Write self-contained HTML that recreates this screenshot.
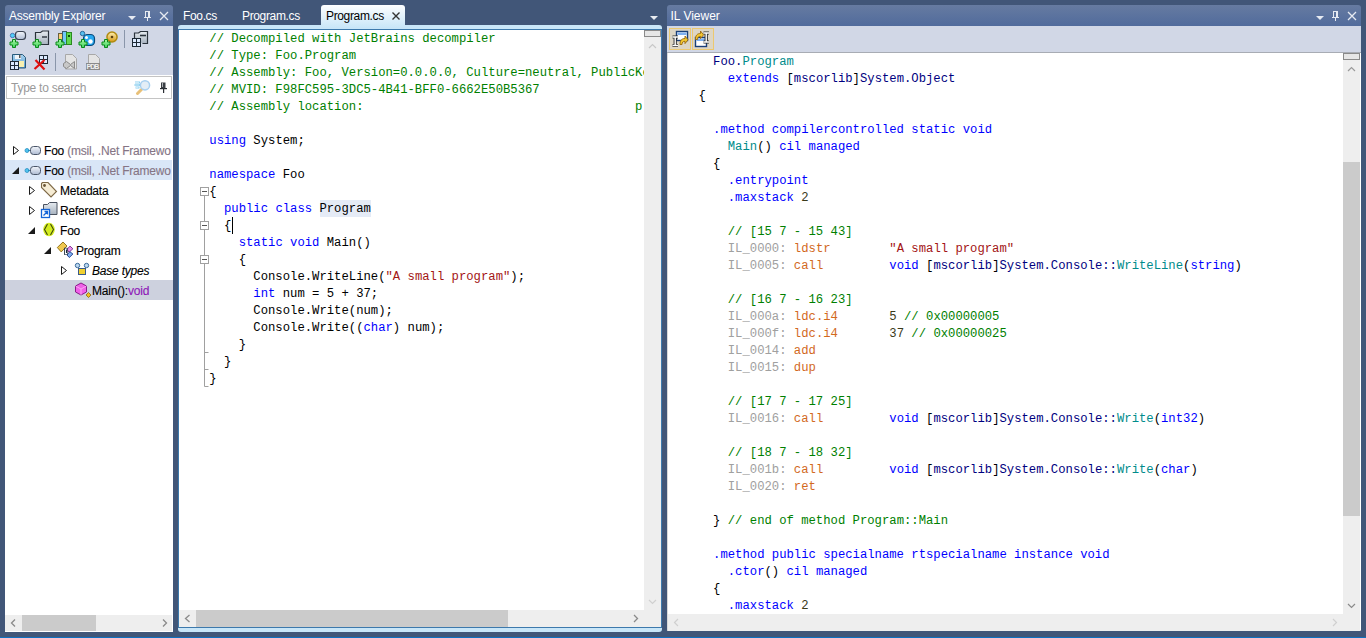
<!DOCTYPE html>
<html><head><meta charset="utf-8">
<style>
*{margin:0;padding:0;box-sizing:border-box}
html,body{width:1366px;height:638px;overflow:hidden;background:#415678;font-family:"Liberation Sans",sans-serif;position:relative}
.a{position:absolute}
.hdr{position:absolute;height:21px;background:linear-gradient(#667ba1,#516b9c);border-radius:3px 3px 0 0}
.ttl{position:absolute;color:#fff;font-size:12px;letter-spacing:-0.22px;white-space:pre;line-height:14px}
.tb{position:absolute;background:#d1d7e6}
.code{position:absolute;font-family:"Liberation Mono",monospace;font-size:12.245px;line-height:17px;white-space:pre;color:#000}
.k{color:#0000ff}.c{color:#008000}.s{color:#a31515}.t{color:#008b8b}.n{color:#000080}.o{color:#d2691e}.g{color:#a0a0a0}.d{color:#3a3a1a}
.sb{position:absolute;background:#eeeeee}
.th{position:absolute;background:#cbcbcb}
.tree{position:absolute;margin-top:1px;font-size:12px;letter-spacing:-0.2px;white-space:pre;line-height:20px;color:#000;-webkit-text-stroke:0.12px currentColor}
</style></head><body>

<!-- ===== Assembly Explorer ===== -->
<div class="a" style="left:5px;top:26px;width:168px;height:606px;background:#fff"></div>
<div class="hdr" style="left:5px;top:5px;width:168px"></div>
<div class="ttl" style="left:9px;top:9px">Assembly Explorer</div>
<div class="tb" style="left:5px;top:26px;width:168px;height:49px"></div>
<div class="a" style="left:6px;top:76px;width:166px;height:23px;border:1px solid #c4c4c4;background:#fff"></div>
<div class="a" style="left:11px;top:81px;font-size:12px;letter-spacing:-0.25px;color:#9a9a9a;white-space:pre;line-height:14px">Type to search</div>

<!-- tree -->
<div class="a" style="left:5px;top:160px;width:167px;height:20px;background:#d9e6f7"></div>
<div class="a" style="left:5px;top:280px;width:168px;height:20px;background:#cdd1de"></div>

<div class="tree" style="left:44px;top:140px;width:128px;overflow:hidden">Foo <span style="color:#857585">(msil, .Net Framewo</span></div>
<div class="tree" style="left:44px;top:160px;width:128px;overflow:hidden">Foo <span style="color:#857585">(msil, .Net Framewo</span></div>
<div class="tree" style="left:60px;top:180px">Metadata</div>
<div class="tree" style="left:60px;top:200px">References</div>
<div class="tree" style="left:60px;top:220px">Foo</div>
<div class="tree" style="left:76px;top:240px">Program</div>
<div class="tree" style="left:92px;top:260px;font-style:italic">Base types</div>
<div class="tree" style="left:92px;top:280px">Main():<span style="color:#8e18b8">void</span></div>

<!-- AE horizontal scrollbar -->
<div class="sb" style="left:5px;top:615px;width:167px;height:16px"></div>
<div class="th" style="left:22px;top:615px;width:74px;height:16px"></div>

<!-- ===== Editor ===== -->
<div class="a" style="left:178px;top:25px;width:484px;height:607px;background:#c9e6f8;border-radius:3px"></div>
<div class="a" style="left:178px;top:29px;width:484px;height:599px;border:1px solid #3d79ac;background:#fff"></div>

<div class="a" style="left:321px;top:5px;width:84px;height:22px;background:linear-gradient(#fdfeff,#cbe7f8);border-radius:3px 3px 0 0"></div>
<div class="ttl" style="left:183px;top:9px;letter-spacing:-0.35px">Foo.cs</div>
<div class="ttl" style="left:242px;top:9px;letter-spacing:-0.35px">Program.cs</div>
<div class="ttl" style="left:326px;top:9px;letter-spacing:-0.35px;color:#000">Program.cs</div>

<div class="a" style="left:320px;top:200px;width:51px;height:17px;background:#e5ebf6"></div>
<div class="code" style="left:209.3px;top:31px;width:434.7px;height:580px;overflow:hidden"><span class="c">// Decompiled with JetBrains decompiler
// Type: Foo.Program
// Assembly: Foo, Version=0.0.0.0, Culture=neutral, PublicKeyToken=null
// MVID: F98FC595-3DC5-4B41-BFF0-6662E50B5367
// Assembly location:                                     p</span>

<span class="k">using</span> System;

<span class="k">namespace</span> Foo
{
  <span class="k">public class</span> Program
  {
    <span class="k">static void</span> Main()
    {
      Console.WriteLine(<span class="s">"A small program"</span>);
      <span class="k">int</span> num = 5 + 37;
      Console.Write(num);
      Console.Write((<span class="k">char</span>) num);
    }
  }
}</div>

<!-- editor scrollbars -->
<div class="sb" style="left:644px;top:30px;width:17px;height:580px"></div>
<div class="sb" style="left:179px;top:610px;width:482px;height:17px"></div>
<div class="th" style="left:196px;top:610px;width:312px;height:17px"></div>

<!-- ===== IL Viewer ===== -->
<div class="a" style="left:667px;top:26px;width:694px;height:605px;background:#fff;border-left:1px solid #d8d8d8;border-bottom:1px solid #c8c8c8"></div>
<div class="hdr" style="left:667px;top:5px;width:694px"></div>
<div class="ttl" style="left:670.5px;top:9px;letter-spacing:0">IL Viewer</div>
<div class="tb" style="left:667px;top:26px;width:694px;height:27px;border-bottom:1px solid #a8acb4"></div>

<div class="code" style="left:698.4px;top:54px;width:644px;height:561px;overflow:hidden">  <span class="n">Foo.</span><span class="t">Program</span>
    <span class="k">extends</span> [<span class="n">mscorlib</span>]<span class="n">System.Object</span>
{

  <span class="k">.method compilercontrolled static void</span>
    <span class="t">Main</span>() <span class="k">cil managed</span>
  {
    <span class="k">.entrypoint</span>
    <span class="k">.maxstack</span> <span class="d">2</span>

    <span class="c">// [15 7 - 15 43]</span>
    <span class="g">IL_0000:</span> <span class="o">ldstr</span>        <span class="s">"A small program"</span>
    <span class="g">IL_0005:</span> <span class="o">call</span>         <span class="k">void</span> [<span class="n">mscorlib</span>]<span class="n">System.Console::</span><span class="t">WriteLine</span>(<span class="k">string</span>)

    <span class="c">// [16 7 - 16 23]</span>
    <span class="g">IL_000a:</span> <span class="o">ldc.i4</span>       <span class="d">5</span> <span class="c">// 0x00000005</span>
    <span class="g">IL_000f:</span> <span class="o">ldc.i4</span>       <span class="d">37</span> <span class="c">// 0x00000025</span>
    <span class="g">IL_0014:</span> <span class="o">add</span>
    <span class="g">IL_0015:</span> <span class="o">dup</span>

    <span class="c">// [17 7 - 17 25]</span>
    <span class="g">IL_0016:</span> <span class="o">call</span>         <span class="k">void</span> [<span class="n">mscorlib</span>]<span class="n">System.Console::</span><span class="t">Write</span>(<span class="k">int32</span>)

    <span class="c">// [18 7 - 18 32]</span>
    <span class="g">IL_001b:</span> <span class="o">call</span>         <span class="k">void</span> [<span class="n">mscorlib</span>]<span class="n">System.Console::</span><span class="t">Write</span>(<span class="k">char</span>)
    <span class="g">IL_0020:</span> <span class="o">ret</span>

  } <span class="c">// end of method Program::Main</span>

  <span class="k">.method public specialname rtspecialname instance void</span>
    <span class="k">.ctor</span>() <span class="k">cil managed</span>
  {
    <span class="k">.maxstack</span> <span class="d">2</span></div>

<!-- IL scrollbars -->
<div class="sb" style="left:1343px;top:53px;width:17px;height:561px"></div>
<div class="th" style="left:1343px;top:162px;width:17px;height:354px"></div>
<div class="sb" style="left:668px;top:614px;width:692px;height:17px"></div>


<svg class="a" style="left:0;top:0" width="1366" height="638" viewBox="0 0 1366 638">
<defs>
<linearGradient id="pill" x1="0" y1="0" x2="0" y2="1"><stop offset="0" stop-color="#f4f7fc"/><stop offset="1" stop-color="#aebbd2"/></linearGradient>
<linearGradient id="fold" x1="0" y1="0" x2="0" y2="1"><stop offset="0" stop-color="#e6ebf0"/><stop offset="1" stop-color="#a7b2bf"/></linearGradient>
</defs>

<!-- AE toolbar icons -->
<defs>
<linearGradient id="grn" x1="0" y1="0" x2="0" y2="1"><stop offset="0" stop-color="#a8f8a0"/><stop offset="1" stop-color="#40d060"/></linearGradient>
<linearGradient id="gear" x1="0" y1="0" x2="0" y2="1"><stop offset="0" stop-color="#fbe9a8"/><stop offset="1" stop-color="#d9a020"/></linearGradient>
<linearGradient id="flop" x1="0" y1="0" x2="0" y2="1"><stop offset="0" stop-color="#a8d4f0"/><stop offset="1" stop-color="#5a9ad0"/></linearGradient>
<g id="plus"><path d="M2.5 0.5h3v2.5h2.5v3h-2.5v2.5h-3v-2.5h-2.5v-3h2.5z" fill="url(#grn)" stroke="#0a8a1a" stroke-width="1"/></g>
<g id="grid"><rect x="0" y="0" width="9" height="9" fill="#1e2a36"/><rect x="1" y="1" width="3" height="3" fill="#dceaff"/><rect x="5" y="1" width="3" height="3" fill="#dceaff"/><rect x="1" y="5" width="3" height="3" fill="#dceaff"/><rect x="5" y="5" width="3" height="3" fill="#dceaff"/></g>
</defs>
<!-- icon1 assembly+plus -->
<circle cx="12.5" cy="35.5" r="2.2" fill="#50d0f8" stroke="#4a78b8" stroke-width="1"/>
<path d="M14.5 35.5h2" stroke="#50c8f0" stroke-width="1"/>
<rect x="15.5" y="31.5" width="10" height="8" rx="3" fill="url(#pill)" stroke="#3a4250" stroke-width="1.2"/>
<use href="#plus" x="10" y="39"/>
<!-- icon2 folder+plus -->
<path d="M35.5 38.5v-6h5l2 -1.5h6v13.5h-13z" fill="url(#fold)" stroke="#2a323c" stroke-width="1.2"/>
<path d="M42 37h5" stroke="#2a323c" stroke-width="1.4"/>
<use href="#plus" x="33" y="39"/>
<!-- icon3 books+plus -->
<rect x="58.5" y="33.5" width="4" height="11" fill="#fcd070" stroke="#6a6040" stroke-width="1"/>
<rect x="62.5" y="31.5" width="4" height="13" fill="#70c8f8" stroke="#3a5a70" stroke-width="1"/>
<rect x="66.5" y="32.5" width="5" height="12" fill="#60d850" stroke="#2a8a20" stroke-width="1"/>
<rect x="68" y="35" width="2" height="2" fill="#0a4a0a"/>
<use href="#plus" x="56" y="39"/>
<!-- icon4 blob+plus -->
<circle cx="82.5" cy="33.5" r="2.2" fill="#58c0f0" stroke="#2a6a9a" stroke-width="1"/>
<rect x="83.5" y="34.5" width="11" height="11" rx="4" fill="#28a8f0" stroke="#0a4a7a" stroke-width="1.2"/>
<circle cx="86.5" cy="37.5" r="1.5" fill="#fff"/>
<circle cx="90.5" cy="41.5" r="2.2" fill="#fff"/>
<use href="#plus" x="79" y="39"/>
<!-- icon5 gear+plus -->
<circle cx="112" cy="37" r="5.8" fill="#b08a10"/>
<circle cx="112" cy="37" r="4.3" fill="url(#gear)"/>
<circle cx="112" cy="37" r="1.3" fill="#5a4010"/>
<use href="#plus" x="102" y="39"/>
<!-- separators -->
<rect x="124" y="30" width="1" height="18" fill="#8a96aa"/>
<rect x="55" y="53" width="1" height="18" fill="#8a96aa"/>
<!-- icon6 folder+grid -->
<path d="M134.5 38v-5h4l2 -1.5h7v12h-5" fill="url(#fold)" stroke="#2a323c" stroke-width="1.2"/>
<path d="M140 35.5h6" stroke="#2a323c" stroke-width="1.6"/>
<use href="#grid" x="132" y="38"/>
<!-- row2 save -->
<path d="M12.5 54.5h10l3 3v10.5h-13z" fill="url(#flop)" stroke="#2a5a7a" stroke-width="1"/>
<rect x="15" y="55" width="6" height="4" fill="#f0f4f8"/>
<rect x="19" y="55" width="1.5" height="3" fill="#555"/>
<rect x="18" y="61" width="6" height="6" fill="#f8f0b0"/>
<use href="#grid" x="10" y="61"/>
<!-- row2 delete -->
<use href="#grid" x="39" y="55"/>
<path d="M34.5 69l10 -9M35.5 60l9 9.5" stroke="#e01010" stroke-width="2.2" fill="none"/>
<!-- vs doc gray -->
<path d="M65.5 54.5h7l4 4v10.5h-11z" fill="#e4e4e4" stroke="#a8a8a8" stroke-width="1"/>
<path d="M63.5 63.5l3 -2l4 3l4 -3v7l-4 -3l-4 3l-3 -2z" fill="#c8c8c8" stroke="#8a8a8a" stroke-width="1"/>
<!-- pdb gray -->
<path d="M88.5 54.5h7l4 4v10.5h-11z" fill="#e4e4e4" stroke="#a8a8a8" stroke-width="1"/>
<rect x="86" y="63" width="14" height="7" fill="#8a8a8a"/>
<text x="86.6" y="69.3" font-family="Liberation Sans" font-size="7" font-weight="bold" fill="#f0f0f0" textLength="12.8">PDB</text>

<!-- IL toolbar buttons -->
<rect x="669.5" y="28.5" width="21" height="21" fill="#ddd6c6" stroke="#ecc870" stroke-width="1"/>
<rect x="692.5" y="28.5" width="21" height="21" fill="#ddd6c6" stroke="#ecc870" stroke-width="1"/>
<rect x="676.5" y="31.5" width="11" height="9" fill="#fff" stroke="#1a3f7a" stroke-width="1.4"/>
<rect x="677.5" y="32.5" width="9" height="2.5" fill="#7fb0f0"/>
<path d="M672.5 37h5.5M675.2 37v8.5M672.5 45.5h5.5" stroke="#2a2a2a" stroke-width="3.2" fill="none"/>
<path d="M672.5 37h5.5M675.2 37v8.5M672.5 45.5h5.5" stroke="#fff" stroke-width="1.4" fill="none"/>
<path d="M680 44.5c0 -4 1.5 -6 5 -6v-2.5l3 3.8l-3 3.8v-2.3c-2 0 -3 1 -3 3.2z" fill="#f4c830" stroke="#9a6a10" stroke-width="0.9"/>
<rect x="695.5" y="37.5" width="11" height="9" fill="#fff" stroke="#1a3f7a" stroke-width="1.4"/>
<rect x="696.5" y="38.5" width="9" height="2.5" fill="#7fb0f0"/>
<path d="M703.5 33h5.5M706.2 33v9M703.5 42h5.5" stroke="#2a2a2a" stroke-width="3.2" fill="none"/>
<path d="M703.5 33h5.5M706.2 33v9M703.5 42h5.5" stroke="#fff" stroke-width="1.4" fill="none"/>
<path d="M695.5 39.5c0 -4 1.5 -6 5 -6v-2.5l3 3.8l-3 3.8v-2.3c-2 0 -3 1 -3 3.2z" fill="#f4c830" stroke="#9a6a10" stroke-width="0.9"/>

<!-- header icons AE -->
<g fill="#e6eaf2" stroke="none">
<path d="M128 16h8l-4 4z"/>
<path d="M1316 16h8l-4 4z"/>
<path d="M650 16h8l-4 4z" fill="#e8ebf0"/>
</g>
<g stroke="#e6eaf2" fill="none" stroke-width="1.3">
<path d="M160 12l8 8M168 12l-8 8"/>
<path d="M1348 12l8 8M1356 12l-8 8"/>
</g>
<g fill="#e6eaf2">
<rect x="145" y="11" width="1" height="6"/><rect x="148" y="11" width="2" height="6"/><rect x="145" y="11" width="5" height="1"/><rect x="144" y="17" width="7" height="1"/><rect x="147" y="18" width="1" height="3"/>
<rect x="1333" y="11" width="1" height="6"/><rect x="1336" y="11" width="2" height="6"/><rect x="1333" y="11" width="5" height="1"/><rect x="1332" y="17" width="7" height="1"/><rect x="1335" y="18" width="1" height="3"/>
</g>
<!-- tab close -->
<path d="M392.5 12.5l7 7M399.5 12.5l-7 7" stroke="#333" stroke-width="1.4" fill="none"/>

<!-- tree expanders -->
<g fill="none" stroke="#1a1a1a" stroke-width="1">
<path d="M13.5 146.5v8l5 -4z"/>
<path d="M29.5 186.5v8l5 -4z"/>
<path d="M29.5 206.5v8l5 -4z"/>
<path d="M61.5 266.5v8l5 -4z"/>
</g>
<g fill="#1a1a1a">
<path d="M19 167v7h-7z"/>
<path d="M35 227v7h-7z"/>
<path d="M51 247v7h-7z"/>
</g>
<!-- assembly icons -->
<g>
<circle cx="27" cy="150.5" r="2" fill="#4fc3f0" stroke="#2b8fc0" stroke-width="0.8"/>
<path d="M28 150.5h3" stroke="#2b8fc0"/>
<rect x="30.5" y="146.5" width="10" height="8" rx="3" fill="url(#pill)" stroke="#4a5568" stroke-width="1"/>
<circle cx="27" cy="170.5" r="2" fill="#4fc3f0" stroke="#2b8fc0" stroke-width="0.8"/>
<path d="M28 170.5h3" stroke="#2b8fc0"/>
<rect x="30.5" y="166.5" width="10" height="8" rx="3" fill="url(#pill)" stroke="#4a5568" stroke-width="1"/>
</g>
<!-- metadata tag -->
<path d="M41.5 183.5l1 -1h5.5l8.5 9l-5.5 5.5l-9.5 -9.5z" fill="#f6ecd4" stroke="#7d6845" stroke-width="1.1"/>
<circle cx="44.5" cy="185.5" r="1.4" fill="#6a5535"/>
<!-- references -->
<path d="M43.5 204.5h4l2 -2h7.5v12h-13.5z" fill="url(#fold)" stroke="#4a5260" stroke-width="1"/>
<rect x="41.5" y="209.5" width="8" height="8" fill="#fff" stroke="#1565d8" stroke-width="1.3"/>
<path d="M43.5 215.5l4 -4M44.5 211.5h3v3" stroke="#1565d8" stroke-width="1.3" fill="none"/>
<!-- namespace -->
<ellipse cx="49" cy="229.5" rx="5.8" ry="6.8" fill="#d4ec20"/>
<path d="M47.5 224l-3 5.5l3 5.5M50.5 224l3 5.5l-3 5.5" stroke="#3e4a10" stroke-width="1.1" fill="none"/>
<!-- class icon -->
<path d="M57.3 247.5l5.7 -5.5l4 4l-5.8 5.9z" fill="#f0c850" stroke="#8a6a10" stroke-width="0.9"/>
<path d="M67 249.4l3 -3.3l2.9 2.7l-3.9 3.4z" fill="#e890f0" stroke="#7a2a8a" stroke-width="0.9"/>
<path d="M67 255l2.8 -3.3l3.1 2.3l-3.6 3.5z" fill="#80b0f0" stroke="#1a3a8a" stroke-width="0.9"/>
<rect x="64" y="247.8" width="3.6" height="7" fill="#1a2a3a"/>
<path d="M67 249h-1.6v4.6h1.6" stroke="#fff" stroke-width="1.1" fill="none"/>
<!-- base types -->
<rect x="78.5" y="268.5" width="7" height="6" fill="#f0d030" stroke="#3a5a8a" stroke-width="1"/>
<circle cx="77.5" cy="265.5" r="2.2" fill="#bcd8f0" stroke="#3a6a9a" stroke-width="1"/>
<circle cx="86.5" cy="265.5" r="2.2" fill="#bcd8f0" stroke="#3a6a9a" stroke-width="1"/>
<!-- method -->
<path d="M81 283l5.5 3v6l-5.5 3l-5.5 -3v-6z" fill="#f060e8" stroke="#8a1a8a" stroke-width="1"/>
<path d="M75.5 286l5.5 3l5.5 -3M81 289v6" stroke="#ffc0f8" stroke-width="0.7" fill="none"/>
<path d="M86 295l2.5 -2.5l2.5 2.5l-2.5 2.5z" fill="#f0c020" stroke="#8a6a10" stroke-width="0.8"/>

<!-- search box icons -->
<path d="M135 82.5h5M134.5 85h5.5M135.5 87.5h4" stroke="#8ed0f0" stroke-width="2" fill="none"/>
<path d="M135 82.5h4M134.5 85h4.5M135.5 87.5h3" stroke="#e8f6fc" stroke-width="0.7" fill="none"/>
<path d="M141.5 89.5l-4 4" stroke="#e8c078" stroke-width="3" stroke-linecap="round"/>
<circle cx="145" cy="85.3" r="4.6" fill="#e4eef6" stroke="#a8d0f0" stroke-width="1.5"/>
<rect x="161" y="82.5" width="4.5" height="5.5" fill="#3a3e44"/>
<rect x="162" y="83" width="1" height="4" fill="#b0b4b8"/>
<rect x="160" y="88" width="7" height="1.2" fill="#2a2e34"/>
<rect x="163" y="89" width="1.2" height="4" fill="#2a2e34"/>
<!-- editor gutter -->
<g fill="#fff" stroke="#a0a0a0" stroke-width="1">
<path d="M204.5 196v190.5h4M204.5 352.5h4M204.5 369.5h4" fill="none"/>
<rect x="200.5" y="187.5" width="8" height="8"/>
<rect x="200.5" y="221.5" width="8" height="8"/>
<rect x="200.5" y="255.5" width="8" height="8"/>
</g>
<g stroke="#555" stroke-width="1">
<path d="M202 191.5h5M202 225.5h5M202 259.5h5"/>
</g>
<!-- caret -->
<rect x="232" y="217" width="1" height="17" fill="#000"/>

<!-- editor scrollbar parts -->
<rect x="644.5" y="30.5" width="16" height="6" fill="#e6e6e6" stroke="#8a8a8a" stroke-width="1"/>
<path d="M649 48l3.5 -3.5l3.5 3.5" stroke="#c8c8c8" fill="none" stroke-width="1.2"/>
<path d="M649 600l3.5 3.5l3.5 -3.5" stroke="#d0d0d0" fill="none" stroke-width="1.2"/>
<path d="M189.5 615l-4 3.5l4 3.5" stroke="#8a8a8a" fill="none" stroke-width="1.3"/>
<path d="M634 615l3.5 3.5l-3.5 3.5" stroke="#8a8a8a" fill="none" stroke-width="1.3"/>
<!-- AE scrollbar arrows -->
<path d="M15 619.5l-3.5 3.5l3.5 3.5" stroke="#8a8a8a" fill="none" stroke-width="1.3"/>
<path d="M163 619.5l3.5 3.5l-3.5 3.5" stroke="#8a8a8a" fill="none" stroke-width="1.3"/>
<!-- IL scrollbar parts -->
<rect x="1343.5" y="53.5" width="16" height="6" fill="#e6e6e6" stroke="#8a8a8a" stroke-width="1"/>
<path d="M1348 71l3.5 -3.5l3.5 3.5" stroke="#9a9a9a" fill="none" stroke-width="1.2"/>
<path d="M1348 604l3.5 3.5l3.5 -3.5" stroke="#8a8a8a" fill="none" stroke-width="1.2"/>
<path d="M678 619l-3.5 3.5l3.5 3.5" stroke="#d0d0d0" fill="none" stroke-width="1.2"/>
<path d="M1333 619l3.5 3.5l-3.5 3.5" stroke="#d0d0d0" fill="none" stroke-width="1.2"/>
</svg>

<!-- bottom blue line -->
<div class="a" style="left:0;top:637px;width:1366px;height:1px;background:#0e70c0"></div>
</body></html>
